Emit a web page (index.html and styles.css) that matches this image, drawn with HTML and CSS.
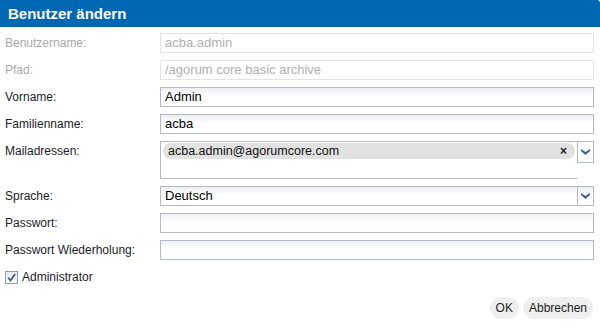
FILE: index.html
```html
<!DOCTYPE html>
<html lang="de">
<head>
    <meta charset="UTF-8">
    <title>Benutzer ändern</title>
    <link rel="stylesheet" href="styles.css">
</head>
<body>
    <div class="window">
        <div class="header">Benutzer ändern</div>

        <div class="form">
            <div class="row disabled">
                <label>Benutzername:</label>
                <div class="field">acba.admin</div>
            </div>
            <div class="row disabled">
                <label>Pfad:</label>
                <div class="field">/agorum core basic archive</div>
            </div>
            <div class="row">
                <label>Vorname:</label>
                <div class="field">Admin</div>
            </div>
            <div class="row">
                <label>Familienname:</label>
                <div class="field">acba</div>
            </div>
            <div class="row mail-row">
                <label>Mailadressen:</label>
                <div class="mail-box">
                    <div class="chip">
                        <span>acba.admin@agorumcore.com</span>
                        <span class="chip-close">×</span>
                    </div>
                </div>
                <div class="trigger">
                    <svg width="9" height="6" viewBox="0 0 9 6"><path d="M0 0 L4.5 3 L9 0 L9 2 L4.5 6 L0 2 Z" fill="#3b5c9e"/></svg>
                </div>
            </div>
            <div class="row">
                <label>Sprache:</label>
                <div class="field combo">
                    <span class="combo-text">Deutsch</span>
                    <div class="trigger inner">
                        <svg width="9" height="6" viewBox="0 0 9 6"><path d="M0 0 L4.5 3 L9 0 L9 2 L4.5 6 L0 2 Z" fill="#3b5c9e"/></svg>
                    </div>
                </div>
            </div>
            <div class="row">
                <label>Passwort:</label>
                <div class="field"></div>
            </div>
            <div class="row">
                <label>Passwort Wiederholung:</label>
                <div class="field"></div>
            </div>
            <div class="check-row">
                <span class="checkbox">
                    <svg width="9" height="9" viewBox="0 0 9 9"><path d="M1 4.5 L3.5 7.5 L8 1" stroke="#3a5a9c" stroke-width="1.8" fill="none"/></svg>
                </span>
                <span>Administrator</span>
            </div>
        </div>

        <div class="buttons">
            <button>OK</button>
            <button>Abbrechen</button>
        </div>
    </div>
</body>
</html>
```

FILE: styles.css
```css
* {
    margin: 0;
    padding: 0;
    box-sizing: border-box;
}

body {
    font-family: 'Liberation Sans', Arial, sans-serif;
    font-size: 12px;
    color: #1c1c28;
    background: #fff;
}

.window {
    width: 600px;
    height: 323px;
    display: flex;
    flex-direction: column;
    background: #fff;
}

.header {
    height: 27px;
    background: #0067b2;
    color: #fff;
    font-weight: bold;
    font-size: 15px;
    line-height: 27px;
    padding-left: 8px;
    border-top-right-radius: 3px;
}

.form {
    padding: 6px 6px 0 5px;
    display: flex;
    flex-direction: column;
    gap: 7px;
}

.row {
    display: flex;
    align-items: center;
    height: 20px;
}

.row label {
    width: 155px;
    flex-shrink: 0;
}

.field {
    flex: 1;
    height: 20px;
    border: 1px solid #b5b8c8;
    background: linear-gradient(#eceef2, #fff 45%);
    padding: 0 4px;
    font-size: 13px;
    line-height: 18px;
    color: #000;
}

.disabled label {
    color: #a9a9a9;
}

.disabled .field {
    border-color: #e4e4e8;
    background: #fff;
    color: #b0b0b0;
}

.mail-row {
    height: 38px;
    align-items: flex-start;
}

.mail-row label {
    padding-top: 3px;
}

.mail-box {
    flex: 1;
    height: 38px;
    border: 1px solid #b5b8c8;
    border-right: none;
    padding: 1px 2px;
}

.chip {
    height: 16px;
    background: #e1e1e1;
    border-radius: 8px;
    display: flex;
    align-items: center;
    justify-content: space-between;
    padding: 0 8px 0 5px;
    font-size: 12.5px;
    color: #111;
}

.chip-close {
    font-size: 12px;
    font-weight: bold;
    color: #222;
}

.trigger {
    width: 17px;
    height: 22px;
    border: 1px solid #b5b8c8;
    background: #fff;
    display: flex;
    align-items: center;
    justify-content: center;
}

.combo {
    display: flex;
    align-items: center;
    justify-content: space-between;
    padding-right: 0;
}

.trigger.inner {
    height: 20px;
    margin: -1px -1px -1px 0;
    background: transparent;
}

.check-row {
    display: flex;
    align-items: center;
    gap: 4px;
    height: 16px;
    margin-top: 2px;
}

.checkbox {
    width: 13px;
    height: 13px;
    border: 1px solid #8e9bb0;
    background: linear-gradient(#e6e9ef, #fff);
    display: flex;
    align-items: center;
    justify-content: center;
}

.buttons {
    margin-top: auto;
    display: flex;
    justify-content: flex-end;
    gap: 4px;
    padding: 0 7px 4px 0;
}

button {
    font-family: 'Liberation Sans', Arial, sans-serif;
    font-size: 12px;
    color: #222;
    background: #efefef;
    border: none;
    border-radius: 11px;
    height: 22px;
    padding: 0 6px;
}
```
